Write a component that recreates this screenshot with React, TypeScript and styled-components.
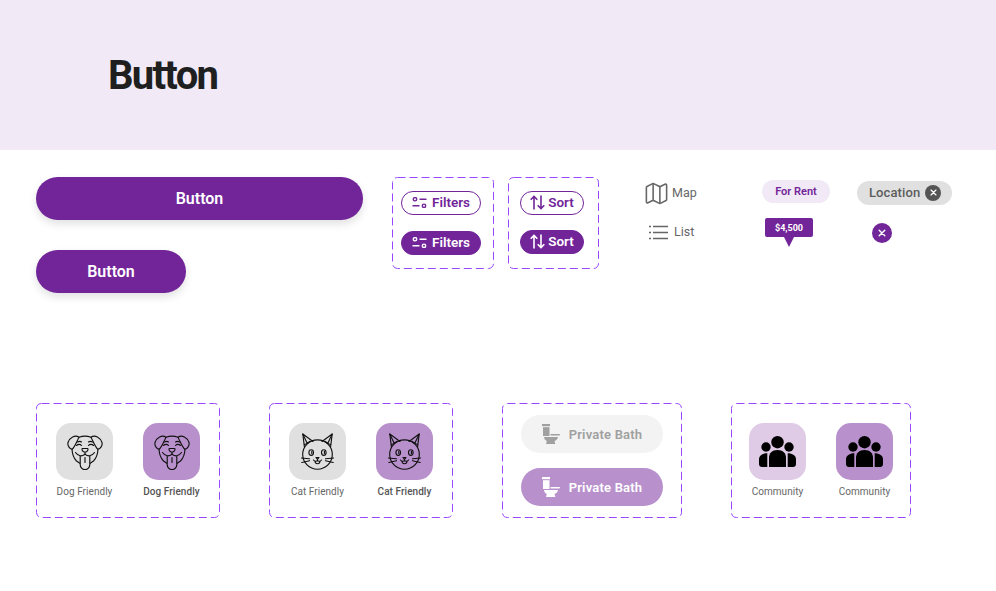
import React from "react";
import styled, { createGlobalStyle } from "styled-components";
import { Map as MapIcon } from "lucide-react";

const purple = "#722599";
const soft = "#b891cc";

const GlobalStyle = createGlobalStyle`
  html, body {
    margin: 0;
    background: #fff;
    font-family: Roboto, "Liberation Sans", sans-serif;
  }
`;

const Page = styled.div`
  width: 996px;
  height: 591px;
  overflow: hidden;
`;

const Header = styled.header`
  height: 150px;
  background: #f1e9f6;
  display: flex;
  align-items: center;
  padding: 2px 0 0 108px;
  box-sizing: border-box;
`;

const Title = styled.h1`
  margin: 0;
  font-size: 40px;
  line-height: 48px;
  font-weight: 700;
  letter-spacing: -1.7px;
  color: #201f1f;
`;

const Content = styled.main`
  padding: 27px 0 0 36px;
`;

const TopRow = styled.div`
  display: flex;
  align-items: flex-start;
  height: 116px;
`;

const BottomRow = styled.div`
  display: flex;
  gap: 49px;
  margin-top: 110px;
`;

const ButtonColumn = styled.div`
  width: 327px;
  margin-right: 29px;
  display: flex;
  flex-direction: column;
  align-items: flex-start;
  gap: 30px;
`;

const MainButton = styled.button<{ $wide?: boolean }>`
  width: ${(p) => (p.$wide ? "327px" : "150px")};
  height: 43px;
  padding: 0 0 1px;
  border: 0;
  border-radius: 22px;
  background: ${purple};
  color: #fff;
  font: 600 16px Roboto, sans-serif;
  box-shadow: 0 4px 8px rgba(0, 0, 0, 0.12);
`;

const Group = styled.section<{ $width: number; $height: number }>`
  position: relative;
  box-sizing: border-box;
  width: ${(p) => p.$width}px;
  height: ${(p) => p.$height}px;
`;

const DashFrame = styled.svg`
  position: absolute;
  inset: 0;
  width: 100%;
  height: 100%;
  pointer-events: none;

  rect {
    x: 0.5px;
    y: 0.5px;
    width: calc(100% - 1px);
    height: calc(100% - 1px);
    rx: 5px;
    fill: none;
    stroke: #9747ff;
    stroke-width: 1;
    stroke-dasharray: 8 4;
  }
`;

const Dashed = ({ width, height, children, className }: {
  width: number;
  height: number;
  children: React.ReactNode;
  className?: string;
}) => (
  <Group $width={width} $height={height} className={className}>
    <DashFrame aria-hidden="true"><rect /></DashFrame>
    {children}
  </Group>
);

const PillGroup = styled(Dashed)`
  margin-right: 14px;
  padding: 14px 0 0 9px;
  display: flex;
  flex-direction: column;
  align-items: flex-start;
  gap: 16px;
`;

const SortGroup = styled(PillGroup)`
  padding-left: 12px;
  gap: 15px;
  margin-right: 0;
`;

const SmallPill = styled.button<{ $filled?: boolean; $width: number; $gap: number }>`
  box-sizing: border-box;
  width: ${(p) => p.$width}px;
  height: 24px;
  padding: 0 0 3px;
  border: 1px solid ${purple};
  border-radius: 12px;
  background: ${(p) => (p.$filled ? purple : "#fff")};
  color: ${(p) => (p.$filled ? "#fff" : purple)};
  font: 600 13.5px Roboto, sans-serif;
  display: flex;
  align-items: center;
  justify-content: center;
  gap: ${(p) => p.$gap}px;

  svg {
    position: relative;
    top: 1px;
  }
`;

const ViewColumn = styled.div`
  margin: 6px 0 0 44px;
  width: 119px;
  display: flex;
  flex-direction: column;
  gap: 19px;
`;

const ViewRow = styled.div<{ $indent: number; $gap: number }>`
  height: 20px;
  padding-left: ${(p) => p.$indent}px;
  display: flex;
  align-items: center;
  gap: ${(p) => p.$gap}px;
  font-size: 12.5px;
  line-height: 18px;
  color: #666;
`;

const TagColumn = styled.div`
  margin-top: 3px;
  width: 95px;
  display: flex;
  flex-direction: column;
  align-items: flex-start;
`;

const RentTag = styled.span`
  width: 68px;
  height: 23px;
  border-radius: 12px;
  background: #f1e9f6;
  color: ${purple};
  font-size: 11px;
  font-weight: 600;
  display: flex;
  align-items: center;
  justify-content: center;
`;

const PriceTag = styled.span`
  position: relative;
  margin: 15px 0 0 3px;
  width: 48px;
  height: 19px;
  border-radius: 2px;
  background: ${purple};
  color: #fff;
  font-size: 9px;
  font-weight: 700;
  display: flex;
  align-items: center;
  justify-content: center;

  &::after {
    content: "";
    position: absolute;
    left: 19px;
    top: 19px;
    border-style: solid;
    border-width: 10px 5px 0;
    border-color: ${purple} transparent transparent;
  }
`;

const FilterColumn = styled.div`
  margin-top: 4px;
  display: flex;
  flex-direction: column;
  align-items: flex-start;
  gap: 18px;
`;

const LocationChip = styled.span`
  box-sizing: border-box;
  width: 95px;
  height: 24px;
  padding: 0 11px 1px 12px;
  border-radius: 12px;
  background: #e0e0e0;
  color: #5c5c5c;
  font-size: 13px;
  font-weight: 500;
  letter-spacing: 0.1px;
  display: flex;
  align-items: center;
  justify-content: space-between;
`;

const CloseDot = styled.span<{ $size: number; $color: string }>`
  width: ${(p) => p.$size}px;
  height: ${(p) => p.$size}px;
  border-radius: 50%;
  background: ${(p) => p.$color};
  display: flex;
  align-items: center;
  justify-content: center;
`;

const CloseButton = styled(CloseDot)`
  margin-left: 15px;
`;

const TileGroup = styled(Dashed)`
  padding: 20px 0 0 20px;
  display: flex;
  gap: 30px;
`;

const CommunityGroup = styled(TileGroup)`
  padding-left: 18px;
`;

const TileItem = styled.div`
  width: 57px;
  display: flex;
  flex-direction: column;
  align-items: center;
`;

const Tile = styled.div<{ $bg: string }>`
  width: 57px;
  height: 57px;
  border-radius: 15px;
  background: ${(p) => p.$bg};
  display: flex;
  align-items: center;
  justify-content: center;
`;

const TileLabel = styled.span<{ $strong?: boolean }>`
  margin-top: 5px;
  font-size: 10px;
  line-height: 14px;
  letter-spacing: 0.05px;
  white-space: nowrap;
  color: ${(p) => (p.$strong ? "#555" : "#666")};
  font-weight: ${(p) => (p.$strong ? 500 : 400)};
`;

const BathGroup = styled(Dashed)`
  padding-top: 12px;
  display: flex;
  flex-direction: column;
  align-items: center;
  gap: 15px;
`;

const BathPill = styled.div<{ $active?: boolean }>`
  width: 142px;
  height: 38px;
  border-radius: 19px;
  background: ${(p) => (p.$active ? soft : "#f3f3f3")};
  color: ${(p) => (p.$active ? "#fff" : "#a0a0a0")};
  font-size: 13px;
  font-weight: 600;
  letter-spacing: 0.2px;
  display: flex;
  align-items: center;
  justify-content: center;
  gap: 9px;
`;

const FilterIcon = () => (
  <svg width="15" height="11" viewBox="0 0 15 11" fill="none" stroke="currentColor" strokeWidth="1.4">
    <circle cx="3" cy="2.200" r="1.700" />
    <path d="M7.500 2.200H14.500M0.500 8.800H7.500" />
    <circle cx="12" cy="8.800" r="1.700" />
  </svg>
);

const SortIcon = () => (
  <svg width="15" height="15" viewBox="0 0 15 15" fill="none" stroke="currentColor" strokeWidth="1.6">
    <path d="M4 14.500V1.500M0.700 4.800 4 1.500l3.300 3.300M11 0.500v13M7.700 10.200l3.300 3.300 3.300-3.300" />
  </svg>
);

const ListIcon = () => (
  <svg width="19" height="15" viewBox="0 0 19 15" fill="none" stroke="#666" strokeWidth="1.4">
    <path d="M4 1.500H19M4 7.500H19M4 13.500H19M0 1.500H2M0 7.500H2M0 13.500H2" />
  </svg>
);

const CrossIcon = ({ size }: { size: number }) => (
  <svg width={size} height={size} viewBox="0 0 10 10" stroke="#fff" strokeWidth="1.800" strokeLinecap="round">
    <path d="M1.500 1.500l7 7M8.500 1.500l-7 7" />
  </svg>
);

const DogIcon = () => (
  <svg width="36" height="36" viewBox="0 0 36 36" fill="none" stroke="#111" strokeWidth="1.150" strokeLinecap="round" strokeLinejoin="round">
    <path d="M12 3.200C8 .4 2.600 3.600 1 8.500c-.7 3 1.600 6.300 4 6.800 2.300-1.500 4.500-7.300 7-12.100Z" />
    <path d="M24 3.200c4-2.800 9.400.4 11 5.300.7 3-1.600 6.300-4 6.800-2.300-1.500-4.500-7.300-7-12.100Z" />
    <path d="M12 3.200c3.500-1.300 8.500-1.300 12 0M5 15.300c.3 5 1.500 8.700 4.500 11.700l3.300 2.200M31 15.300c-.3 5-1.500 8.700-4.500 11.700l-3.300 2.200" />
    <path d="M9.500 11.500c1.500-1.600 3.700-1.600 5 0M21.500 11.500c1.300-1.600 3.500-1.600 5 0M10.500 8c1.500-.7 3-.7 4 0M21.500 8c1-.7 2.500-.7 4 0" />
    <path d="M15.200 14.500h5.600c.8 1.700-.8 3.300-2.800 3.700-2-.4-3.600-2-2.800-3.700ZM18 18.200v2" />
    <path d="M8.500 18.500c3 4.200 6.500 4 9.500 1.700 3 2.300 6.500 2.500 9.500-1.700" />
    <path d="M13.200 22.300v8.500a4.800 4.800 0 0 0 9.600 0v-8.500M18 23.500v5" />
  </svg>
);

const CatIcon = () => (
  <svg width="33" height="37" viewBox="0 0 33 37" fill="none" stroke="#111" strokeWidth="1.150" strokeLinecap="round" strokeLinejoin="round">
    <path d="M3.500 14.500 1.800 1 12 8.500M29.500 14.500 31.200 1 21 8.500" />
    <path d="M1.800 1l4.500 9.500M3.400 11.500l2.900-1 2.400-2.200M31.200 1l-4.500 9.500M29.600 11.500l-2.900-1-2.400-2.200" />
    <ellipse cx="16.500" cy="21.500" rx="14.800" ry="14.700" />
    <ellipse cx="10.200" cy="19.500" rx="2.300" ry="2.800" />
    <ellipse cx="22.800" cy="19.500" rx="2.300" ry="2.800" />
    <path d="M10.800 18.300v2.200M23.400 18.300v2.200" />
    <path d="M15 24.500h3l-1.500 2ZM16.500 26.500v1.500M12.500 27c1 1.500 3 1.500 4 .6 1 .9 3 .9 4-.6M14 28.300c.2 3.200 4.800 3.200 5 0" />
    <path d="M0 25l8.500.8M.8 29.500l7.700-1.800M33 25l-8.500.8M32.200 29.500l-7.700-1.800" />
  </svg>
);

const ToiletIcon = () => (
  <svg width="18" height="20" viewBox="0 0 18 20" fill="currentColor">
    <rect x="0" y="0" width="8" height="2.200" />
    <rect x="1" y="3.200" width="6.500" height="8.800" />
    <path d="M8.500 10H18c0 .8-.4 1.500-1 1.500H8.500Z" />
    <path d="M2 13h14c-.4 2.200-2 3.600-3.500 4l.8 3H4l.8-3C3 16.300 2.300 15 2 13Z" />
  </svg>
);

const CommunityIcon = () => (
  <svg width="37" height="31" viewBox="0 0 37 31" fill="#000">
    <circle cx="18.500" cy="6.200" r="6.200" />
    <circle cx="7" cy="11" r="4.700" />
    <circle cx="30" cy="11" r="4.700" />
    <path d="M10 22c0-5 3-8 8.500-8s8.500 3 8.500 8v9H10Z" />
    <path d="M8.300 17.200V31H3c-1.800 0-3-1.200-3-3v-5c0-3.200 3.600-5.800 8.300-5.800Z" />
    <path d="M28.700 17.200V31H34c1.800 0 3-1.200 3-3v-5c0-3.200-3.600-5.800-8.300-5.800Z" />
  </svg>
);

export default function App() {
  return (
    <Page>
      <GlobalStyle />
      <Header>
        <Title>Button</Title>
      </Header>
      <Content>
        <TopRow>
          <ButtonColumn>
            <MainButton $wide>Button</MainButton>
            <MainButton>Button</MainButton>
          </ButtonColumn>

          <PillGroup width={102} height={92}>
            <SmallPill $width={80} $gap={5}><FilterIcon />Filters</SmallPill>
            <SmallPill $width={80} $gap={5} $filled><FilterIcon />Filters</SmallPill>
          </PillGroup>
          <SortGroup width={91} height={92}>
            <SmallPill $width={64} $gap={3}><SortIcon />Sort</SmallPill>
            <SmallPill $width={64} $gap={3} $filled><SortIcon />Sort</SmallPill>
          </SortGroup>

          <ViewColumn>
            <ViewRow $indent={0} $gap={2}>
              <MapIcon size={27} color="#666" strokeWidth={1.4} />
              Map
            </ViewRow>
            <ViewRow $indent={6} $gap={6}>
              <ListIcon />
              List
            </ViewRow>
          </ViewColumn>

          <TagColumn>
            <RentTag>For Rent</RentTag>
            <PriceTag>$4,500</PriceTag>
          </TagColumn>

          <FilterColumn>
            <LocationChip>
              Location
              <CloseDot $size={16} $color="#555"><CrossIcon size={7} /></CloseDot>
            </LocationChip>
            <CloseButton $size={20} $color={purple}><CrossIcon size={8} /></CloseButton>
          </FilterColumn>
        </TopRow>

        <BottomRow>
          <TileGroup width={184} height={115}>
            <TileItem>
              <Tile $bg="#e0e0e0"><DogIcon /></Tile>
              <TileLabel>Dog Friendly</TileLabel>
            </TileItem>
            <TileItem>
              <Tile $bg={soft}><DogIcon /></Tile>
              <TileLabel $strong>Dog Friendly</TileLabel>
            </TileItem>
          </TileGroup>
          <TileGroup width={184} height={115}>
            <TileItem>
              <Tile $bg="#e0e0e0"><CatIcon /></Tile>
              <TileLabel>Cat Friendly</TileLabel>
            </TileItem>
            <TileItem>
              <Tile $bg={soft}><CatIcon /></Tile>
              <TileLabel $strong>Cat Friendly</TileLabel>
            </TileItem>
          </TileGroup>
          <BathGroup width={180} height={115}>
            <BathPill><ToiletIcon />Private Bath</BathPill>
            <BathPill $active><ToiletIcon />Private Bath</BathPill>
          </BathGroup>
          <CommunityGroup width={180} height={115}>
            <TileItem>
              <Tile $bg="#dfcbe6"><CommunityIcon /></Tile>
              <TileLabel>Community</TileLabel>
            </TileItem>
            <TileItem>
              <Tile $bg={soft}><CommunityIcon /></Tile>
              <TileLabel>Community</TileLabel>
            </TileItem>
          </CommunityGroup>
        </BottomRow>
      </Content>
    </Page>
  );
}
